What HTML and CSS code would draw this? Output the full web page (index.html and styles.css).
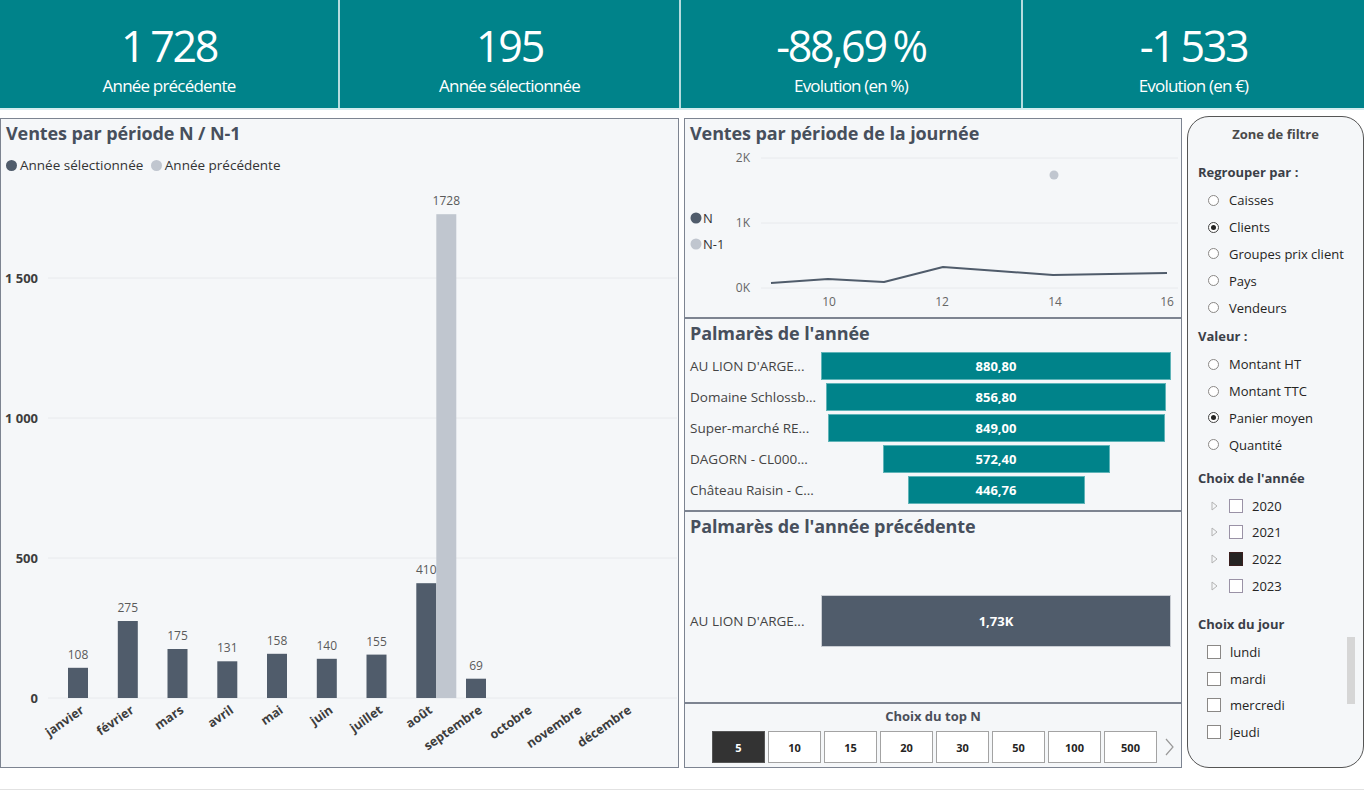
FILE: index.html
```html
<!DOCTYPE html>
<html lang="fr">
<head>
  <meta charset="UTF-8" />
  <title>Tableau de bord des ventes</title>
  <link rel="stylesheet" href="styles.css">
</head>
<body>

  <header class="kpis">
    <div class="kpi">
      <div class="kpi-value">1 728</div>
      <div class="kpi-label">Année précédente</div>
    </div>
    <div class="kpi">
      <div class="kpi-value">195</div>
      <div class="kpi-label">Année sélectionnée</div>
    </div>
    <div class="kpi">
      <div class="kpi-value">-88,69 %</div>
      <div class="kpi-label">Evolution (en %)</div>
    </div>
    <div class="kpi">
      <div class="kpi-value">-1 533</div>
      <div class="kpi-label">Evolution (en €)</div>
    </div>
  </header>

  <main class="board">

    <!-- Ventes mensuelles, année N contre N-1 -->
    <section class="card card-months">
      <h2 class="card-title">Ventes par période N / N-1</h2>
      <div class="legend">
        <span class="dot dot-n"></span>Année sélectionnée
        <span class="dot dot-n1"></span>Année précédente
      </div>
      <svg class="chart-months" width="677" height="590" viewBox="0 0 677 590">
        <g class="grid">
          <line x1="47" y1="101" x2="676" y2="101" />
          <line x1="47" y1="241" x2="676" y2="241" />
          <line x1="47" y1="381" x2="676" y2="381" />
          <line x1="47" y1="521" x2="676" y2="521" />
        </g>
        <g class="axis-y">
          <text x="37" y="106">1 500</text>
          <text x="37" y="246">1 000</text>
          <text x="37" y="386">500</text>
          <text x="37" y="526">0</text>
        </g>
        <g class="bars-n">
          <rect x="67" y="490.8" width="20" height="30.2" />
          <rect x="116.8" y="444" width="20" height="77" />
          <rect x="166.5" y="472" width="20" height="49" />
          <rect x="216.3" y="484.3" width="20" height="36.7" />
          <rect x="266" y="476.8" width="20" height="44.2" />
          <rect x="315.8" y="481.8" width="20" height="39.2" />
          <rect x="365.5" y="477.6" width="20" height="43.4" />
          <rect x="415.3" y="406.2" width="20" height="114.8" />
          <rect x="465" y="501.7" width="20" height="19.3" />
        </g>
        <g class="bars-n1">
          <rect x="435.3" y="37.2" width="20" height="483.8" />
        </g>
        <g class="values">
          <text x="77" y="481.8">108</text>
          <text x="126.8" y="435">275</text>
          <text x="176.5" y="463">175</text>
          <text x="226.3" y="475.3">131</text>
          <text x="276" y="467.8">158</text>
          <text x="325.8" y="472.8">140</text>
          <text x="375.5" y="468.6">155</text>
          <text x="425.3" y="397.2">410</text>
          <text x="445.3" y="28.2">1728</text>
          <text x="475" y="492.7">69</text>
        </g>
        <g class="axis-x">
          <text transform="translate(84 535) rotate(-35)">janvier</text>
          <text transform="translate(133.8 535) rotate(-35)">février</text>
          <text transform="translate(183.5 535) rotate(-35)">mars</text>
          <text transform="translate(233.3 535) rotate(-35)">avril</text>
          <text transform="translate(283 535) rotate(-35)">mai</text>
          <text transform="translate(332.8 535) rotate(-35)">juin</text>
          <text transform="translate(382.5 535) rotate(-35)">juillet</text>
          <text transform="translate(432.3 535) rotate(-35)">août</text>
          <text transform="translate(482 535) rotate(-35)">septembre</text>
          <text transform="translate(531.8 535) rotate(-35)">octobre</text>
          <text transform="translate(581.5 535) rotate(-35)">novembre</text>
          <text transform="translate(631.3 535) rotate(-35)">décembre</text>
        </g>
      </svg>
    </section>

    <div class="col-mid">

      <!-- Ventes par heure -->
      <section class="card card-hours">
        <h2 class="card-title">Ventes par période de la journée</h2>
        <svg class="chart-hours" width="496" height="168" viewBox="0 0 496 168">
          <g class="grid">
            <line x1="76" y1="9" x2="493" y2="9" />
            <line x1="76" y1="74" x2="493" y2="74" />
            <line x1="76" y1="139" x2="493" y2="139" />
          </g>
          <g class="axis-y">
            <text x="65" y="13">2K</text>
            <text x="65" y="78">1K</text>
            <text x="65" y="143">0K</text>
          </g>
          <g class="axis-x">
            <text x="144" y="157">10</text>
            <text x="257" y="157">12</text>
            <text x="370" y="157">14</text>
            <text x="482" y="157">16</text>
          </g>
          <g class="legend-svg">
            <circle cx="11" cy="69" r="5.5" class="fill-n" />
            <text x="18" y="73.5">N</text>
            <circle cx="11" cy="95" r="5.5" class="fill-n1" />
            <text x="18" y="99.5">N-1</text>
          </g>
          <polyline class="line-n" points="86,134 143,130 199,133 258,118 313,122 368,126 425,125 482,124" />
          <circle cx="369" cy="26" r="4.5" class="fill-n1" />
        </svg>
      </section>

      <!-- Classement de l'année -->
      <section class="card card-top">
        <h2 class="card-title">Palmarès de l'année</h2>
        <div class="rank">
          <div class="rank-row">
            <span class="rank-name">AU LION D'ARGE...</span>
            <div class="rank-track"><div class="rank-bar" style="width:350px">880,80</div></div>
          </div>
          <div class="rank-row">
            <span class="rank-name">Domaine Schlossb...</span>
            <div class="rank-track"><div class="rank-bar" style="width:340px">856,80</div></div>
          </div>
          <div class="rank-row">
            <span class="rank-name">Super-marché RE...</span>
            <div class="rank-track"><div class="rank-bar" style="width:337px">849,00</div></div>
          </div>
          <div class="rank-row">
            <span class="rank-name">DAGORN - CL000...</span>
            <div class="rank-track"><div class="rank-bar" style="width:227px">572,40</div></div>
          </div>
          <div class="rank-row">
            <span class="rank-name">Château Raisin - C...</span>
            <div class="rank-track"><div class="rank-bar" style="width:177px">446,76</div></div>
          </div>
        </div>
      </section>

      <!-- Classement de l'année précédente -->
      <section class="card card-prev">
        <h2 class="card-title">Palmarès de l'année précédente</h2>
        <div class="rank rank-single">
          <div class="rank-row">
            <span class="rank-name">AU LION D'ARGE...</span>
            <div class="rank-track"><div class="rank-bar rank-bar-prev" style="width:350px">1,73K</div></div>
          </div>
        </div>
      </section>

      <!-- Choix du nombre de lignes -->
      <section class="card card-topn">
        <div class="topn-title">Choix du top N</div>
        <div class="topn-row">
          <button class="topn-btn active">5</button>
          <button class="topn-btn">10</button>
          <button class="topn-btn">15</button>
          <button class="topn-btn">20</button>
          <button class="topn-btn">30</button>
          <button class="topn-btn">50</button>
          <button class="topn-btn">100</button>
          <button class="topn-btn">500</button>
          <svg class="topn-next" width="10" height="20" viewBox="0 0 10 20">
            <polyline points="2,2 9,10 2,18" />
          </svg>
        </div>
      </section>

    </div>

    <!-- Filtres -->
    <aside class="filters">
      <div class="filters-title">Zone de filtre</div>

      <div class="filter-head">Regrouper par :</div>
      <ul class="opts">
        <li><span class="radio"></span>Caisses</li>
        <li><span class="radio on"></span>Clients</li>
        <li><span class="radio"></span>Groupes prix client</li>
        <li><span class="radio"></span>Pays</li>
        <li><span class="radio"></span>Vendeurs</li>
      </ul>

      <div class="filter-head">Valeur :</div>
      <ul class="opts">
        <li><span class="radio"></span>Montant HT</li>
        <li><span class="radio"></span>Montant TTC</li>
        <li><span class="radio on"></span>Panier moyen</li>
        <li><span class="radio"></span>Quantité</li>
      </ul>

      <div class="filter-head head-year">Choix de l'année</div>
      <ul class="opts tree">
        <li><svg class="caret" width="7" height="10" viewBox="0 0 7 10"><polygon points="1,1 6,5 1,9" /></svg><span class="check"></span>2020</li>
        <li><svg class="caret" width="7" height="10" viewBox="0 0 7 10"><polygon points="1,1 6,5 1,9" /></svg><span class="check"></span>2021</li>
        <li><svg class="caret" width="7" height="10" viewBox="0 0 7 10"><polygon points="1,1 6,5 1,9" /></svg><span class="check on"></span>2022</li>
        <li><svg class="caret" width="7" height="10" viewBox="0 0 7 10"><polygon points="1,1 6,5 1,9" /></svg><span class="check"></span>2023</li>
      </ul>

      <div class="filter-head head-day">Choix du jour</div>
      <ul class="opts days">
        <li><span class="check"></span>lundi</li>
        <li><span class="check"></span>mardi</li>
        <li><span class="check"></span>mercredi</li>
        <li><span class="check"></span>jeudi</li>
        <span class="scroll-thumb"></span>
      </ul>
    </aside>

  </main>

  <div class="page-end"></div>

</body>
</html>
```

FILE: styles.css
```css
* {
  box-sizing: border-box;
}
body {
  margin: 0;
  width: 1364px;
  overflow: hidden;
  font-family: "Open Sans", "Segoe UI", sans-serif;
  color: #252423;
  background: #fff;
}

/* Bandeau des indicateurs */
.kpis {
  display: grid;
  grid-template-columns: 338px 339px 340px 1fr;
  gap: 2px;
  height: 110px;
  background: #b5dcdf;
  border-bottom: 2px solid #d3ecee;
}
.kpi {
  background: #00838a;
  color: #fff;
  display: flex;
  flex-direction: column;
  align-items: center;
  padding-top: 20px;
}
.kpi-value {
  font-size: 43px;
  line-height: 52px;
  letter-spacing: -2.3px;
  word-spacing: -2px;
}
.kpi-label {
  font-size: 17px;
  line-height: 24px;
  letter-spacing: -0.8px;
  margin-top: 2px;
}

/* Grille principale */
.board {
  display: grid;
  grid-template-columns: 679px 498px 177px;
  column-gap: 5px;
  margin-top: 8px;
  height: 650px;
}
.card {
  background: #f5f7f9;
  border: 1px solid #7d8491;
  overflow: hidden;
}
.card-title {
  margin: 0;
  height: 30px;
  line-height: 29px;
  padding-left: 5px;
  font-size: 18px;
  font-weight: 700;
  letter-spacing: -0.1px;
  color: #474f5c;
  white-space: nowrap;
}
.legend {
  height: 28px;
  padding: 4px 0 0 5px;
  line-height: 24px;
  font-size: 13.5px;
  color: #333;
}
.dot {
  display: inline-block;
  width: 11px;
  height: 11px;
  border-radius: 50%;
  margin-right: 3px;
  vertical-align: -1px;
}
.dot-n {
  background: #505c6b;
}
.dot-n1 {
  background: #c0c6cf;
  margin-left: 4px;
}
svg {
  display: block;
}
.grid line {
  stroke: #e8eaed;
  stroke-width: 1;
}
.bars-n rect,
.fill-n {
  fill: #505c6b;
}
.bars-n1 rect,
.fill-n1 {
  fill: #c0c6cf;
}
.chart-months text {
  font-family: "Open Sans", sans-serif;
  font-size: 12px;
}
.chart-months .axis-y text {
  text-anchor: end;
  font-weight: 700;
  font-size: 13px;
  fill: #3d3d3d;
}
.chart-months .values text {
  text-anchor: middle;
  fill: #5a5a5a;
}
.chart-months .axis-x text {
  text-anchor: end;
  font-weight: 700;
  font-size: 12.5px;
  fill: #3d3d3d;
}

.col-mid {
  display: flex;
  flex-direction: column;
}
.card-hours {
  height: 200px;
}
.chart-hours text {
  font-family: "Open Sans", sans-serif;
  font-size: 12px;
  fill: #666;
}
.chart-hours .axis-y text {
  text-anchor: end;
}
.chart-hours .axis-x text {
  text-anchor: middle;
}
.chart-hours .legend-svg text {
  font-size: 13px;
  fill: #333;
}
.line-n {
  fill: none;
  stroke: #505c6b;
  stroke-width: 2;
  stroke-linejoin: round;
}

/* Palmarès */
.card-top {
  height: 193px;
}
.card-prev {
  height: 192px;
  display: flex;
  flex-direction: column;
}
.rank {
  padding-top: 1px;
}
.rank-single {
  flex: 1;
  display: flex;
  align-items: center;
  padding: 0 0 2px;
}
.rank-single .rank-row {
  flex: 1;
  height: 54px;
}
.rank-row {
  display: flex;
  align-items: center;
  height: 31px;
}
.rank-name {
  width: 136px;
  padding-left: 5px;
  font-size: 13.5px;
  color: #444;
  white-space: nowrap;
}
.rank-track {
  width: 350px;
  display: flex;
  justify-content: center;
}
.rank-bar {
  height: 28px;
  line-height: 26px;
  background: #00838a;
  border: 1px solid #5fb4b8;
  color: #fff;
  font-size: 13px;
  font-weight: 700;
  text-align: center;
}
.rank-bar-prev {
  height: 52px;
  line-height: 50px;
  background: #505c6b;
  border-color: #c9cdd3;
}

/* Choix du top N */
.card-topn {
  height: 65px;
}
.topn-title {
  text-align: center;
  font-size: 13px;
  font-weight: 700;
  color: #4a4f5a;
  line-height: 20px;
  padding-top: 2px;
}
.topn-row {
  display: flex;
  align-items: center;
  gap: 3px;
  padding-left: 27px;
  margin-top: 5px;
}
.topn-btn {
  width: 53px;
  height: 32px;
  padding: 0;
  border: 1px solid #a3a3a3;
  background: #fff;
  font-family: inherit;
  font-size: 11px;
  font-weight: 700;
  color: #252423;
}
.topn-btn.active {
  background: #333;
  color: #fff;
  border-color: #555;
}
.topn-next {
  margin-left: 4px;
}
.topn-next polyline {
  fill: none;
  stroke: #999;
  stroke-width: 1.2;
}

/* Zone de filtre */
.filters {
  margin-top: -2px;
  height: 652px;
  background: #f5f7f9;
  border: 1px solid #555;
  border-radius: 22px;
  padding: 7px 0 0 10px;
  font-size: 13px;
}
.filters-title {
  text-align: center;
  font-weight: 700;
  color: #4a4a4a;
  line-height: 20px;
  padding-right: 10px;
}
.filter-head {
  margin-top: 18px;
  line-height: 20px;
  font-weight: 700;
  color: #3b3f48;
}
.opts + .filter-head {
  margin-top: 5px;
}
.opts + .head-year {
  margin-top: 10px;
}
.opts + .head-day {
  margin-top: 15px;
}
.opts {
  list-style: none;
  margin: 5px 0 0;
  padding: 0 0 0 10px;
  position: relative;
}
.opts li {
  display: flex;
  align-items: center;
  height: 26.8px;
  color: #252423;
}
.radio {
  width: 11px;
  height: 11px;
  border: 1px solid #8a8886;
  border-radius: 50%;
  margin-right: 10px;
  background: #fff;
  position: relative;
}
.radio.on {
  border-color: #444;
}
.radio.on::after {
  content: "";
  position: absolute;
  left: 2px;
  top: 2px;
  width: 5px;
  height: 5px;
  border-radius: 50%;
  background: #252423;
}
.tree {
  margin-top: 4px;
}
.tree li {
  padding-left: 3px;
}
.caret {
  margin-right: 11px;
}
.caret polygon {
  fill: none;
  stroke: #b3b3b3;
  stroke-width: 1;
}
.check {
  width: 14px;
  height: 14px;
  border: 1px solid #9a92a6;
  background: #fff;
  margin-right: 9px;
}
.check.on {
  background: #252423;
  border-color: #3a1f1f;
}
.days {
  margin-top: 4px;
  padding-left: 9px;
}
.days .check {
  border-color: #8a8886;
}
.scroll-thumb {
  position: absolute;
  left: 149px;
  top: -1px;
  width: 8px;
  height: 67px;
  background: #d6d6d6;
}

.page-end {
  height: 22px;
  border-bottom: 1px solid #e2e2e2;
}
```
